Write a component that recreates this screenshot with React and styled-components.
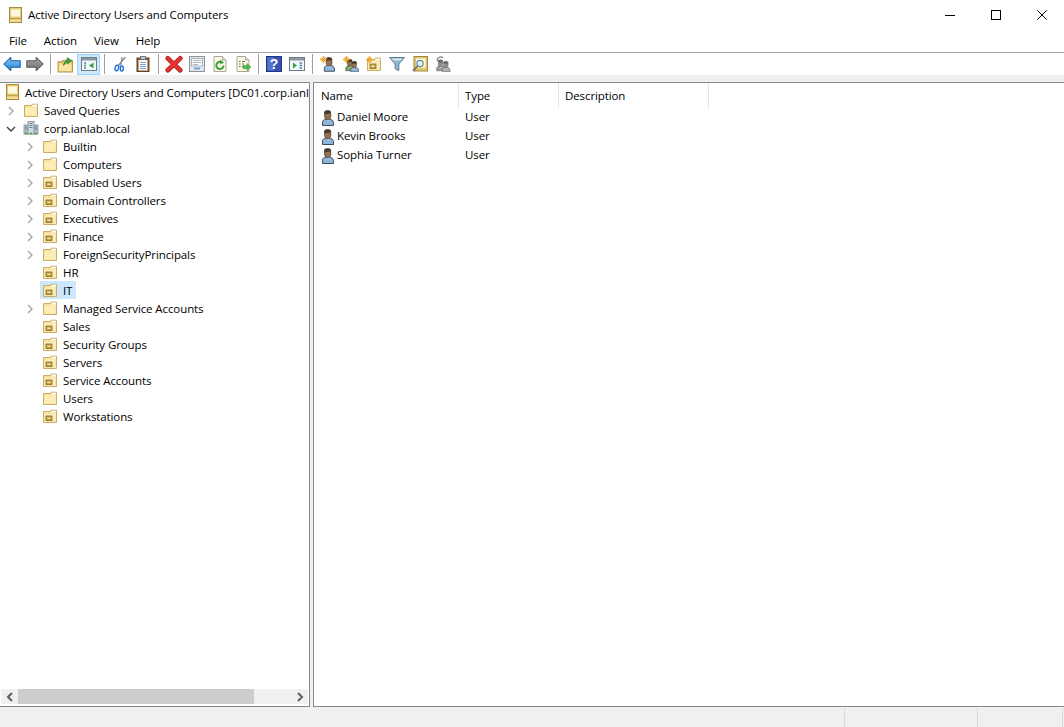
import React from "react";
import styled, { createGlobalStyle } from "styled-components";

const GlobalStyle = createGlobalStyle`
  html, body {
    margin: 0;
    padding: 0;
    background: #ffffff;
    overflow: hidden;
  }
  body {
    font-family: "Open Sans", "Noto Sans", "Liberation Sans", sans-serif;
    font-size: 11.5px;
    line-height: 14px;
    letter-spacing: -0.1px;
    color: #000000;
  }
`;

const Icon = ({ children, size = 16 }) => (
  <svg width={size} height={size} viewBox="0 0 16 16" style={{ display: "block", flex: "none" }}>
    {children}
  </svg>
);

const Figure = ({ x = 0, y = 0, s = 1, body = "#8db4da", hair = "#4a3b2c", face = "#94714f", edge = "#3a4a5c" }) => (
  <g transform={`translate(${x} ${y}) scale(${s})`}>
    <path d="M2.5 15.5 V12.2 C2.5 10.4 4.4 9.4 5.6 9 H9.6 C11 9.4 13.5 10.4 13.5 12.6 V15.5 Z" fill={body} stroke={edge} strokeWidth="1" />
    <path d="M7 9.6 L8 12 L9.2 9.6 Z" fill="#dfeaf4" />
    <path d="M4.6 1.8 C5.6 .4 9.6 .3 10.6 1.8 L10.8 6.4 C10.3 8.8 8.8 9.8 7.8 9.8 C6.4 9.8 5 8.8 4.6 6.4 Z" fill={face} stroke={hair} strokeWidth=".8" />
    <path d="M4.4 1.8 C5.6 0 9.8 0 10.8 1.8 L10.8 3.6 L4.8 4.2 Z" fill={hair} />
  </g>
);

const Star = ({ x = 3.5, y = 3.5 }) => (
  <g transform={`translate(${x} ${y})`}>
    <path d="M0 -3.4 L.9 -1 L3.4 0 L.9 1 L0 3.4 L-.9 1 L-3.4 0 L-.9 -1 Z M-2 -2 L2 2 M2 -2 L-2 2" fill="#f7c63a" stroke="#e88b12" strokeWidth=".7" />
  </g>
);

const UserIcon = () => (
  <Icon>
    <Figure />
  </Icon>
);

const FolderShape = ({ ou }) => (
  <g>
    <path d="M1.5 3.5 H9 V2.2 H14.5 V14.5 H1.5 Z" fill="#f8e29c" stroke="#ccae66" strokeWidth="1" />
    <path d="M9.5 2.8 H14 V4.5 H9.5 Z" fill="#ffffff" />
    <path d="M2.5 5.5 H13.5 V13.5 H2.5 Z" fill="#fdedb8" />
    {ou && <rect x="4" y="8" width="6" height="4.5" fill="#c9a23f" stroke="#7d6a3a" strokeWidth=".8" />}
    {ou && <rect x="5.3" y="9.6" width="3.4" height="1.2" fill="#f7eab8" />}
  </g>
);

const FolderIcon = ({ ou }) => (
  <Icon>
    <FolderShape ou={ou} />
  </Icon>
);

const SnapIcon = () => (
  <Icon>
    <rect x="2.5" y=".5" width="12" height="15" fill="#e3cb78" stroke="#a68a3c" />
    <rect x="4" y="2.5" width="9" height="7" fill="#fdf9e0" />
    <rect x="3" y="11" width="11" height="1" fill="#bfa04c" />
    <rect x="3" y="13" width="11" height="2" fill="#f2de96" />
  </Icon>
);

const DomainIcon = () => (
  <Icon>
    <rect x="1" y="5" width="5" height="9" fill="#b9c4cc" stroke="#7f8c95" strokeWidth=".8" />
    <rect x="10" y="5" width="5" height="9" fill="#b9c4cc" stroke="#7f8c95" strokeWidth=".8" />
    <rect x="5" y="1.5" width="6" height="12.5" fill="#d3dce2" stroke="#76838c" strokeWidth=".8" />
    <path d="M6.5 3.5 H9.5 M6.5 5.5 H9.5 M6.5 7.5 H9.5 M2 7 H4.5 M2 9 H4.5 M11.5 7 H14 M11.5 9 H14" stroke="#5d7f96" strokeWidth="1" />
    <rect x="2" y="12.5" width="2" height="2" fill="#40b040" />
    <rect x="7" y="12.5" width="2" height="2" fill="#40b040" />
    <rect x="12" y="12.5" width="2" height="2" fill="#40b040" />
  </Icon>
);

const Arrow = ({ dir, top, bottom, edge, id }) => (
  <Icon size={18}>
    <defs>
      <linearGradient id={id} x1="0" y1="0" x2="0" y2="1">
        <stop offset="0" stopColor={top} />
        <stop offset="1" stopColor={bottom} />
      </linearGradient>
    </defs>
    <path
      transform={dir === "right" ? "translate(16 0) scale(-1 1)" : undefined}
      d="M.7 8 L7 2.2 V5.2 H15.3 V10.8 H7 V13.8 Z"
      fill={`url(#${id})`}
      stroke={edge}
      strokeWidth=".9"
      strokeLinejoin="round"
    />
  </Icon>
);

const UpIcon = () => (
  <Icon size={17}>
    <path d="M1 5.5 H5 L6 4 H14.5 V15 H1 Z" fill="#f2d37d" stroke="#b8964a" />
    <path d="M2 8 H13.5 V14 H2 Z" fill="#fae6a5" />
    <path d="M6 9 C6.5 5.5 8 4.5 9.5 4 V1.5 L14 4.5 L9.8 7.6 V5.8 C8.5 6.2 7.4 7.4 6 9 Z" fill="#3fa63c" stroke="#21761f" strokeWidth=".5" />
  </Icon>
);

const TreeToggleIcon = () => (
  <Icon>
    <rect x=".5" y="1.5" width="15" height="13" fill="#f3f6f8" stroke="#6f7d88" />
    <rect x="1" y="2" width="14" height="2.5" fill="#8a97a2" />
    <path d="M3 7 H5 M3 9.5 H5 M3 12 H5" stroke="#4d83a8" strokeWidth="1.3" />
    <path d="M12.5 6.5 V12.5 L8 9.5 Z" fill="#34a33a" />
  </Icon>
);

const CutIcon = () => (
  <Icon>
    <path d="M13.5 .8 L6.5 9.5 M10 1 L8.8 9.5" stroke="#7a838c" strokeWidth="1.2" fill="none" />
    <ellipse cx="4.8" cy="12" rx="1.7" ry="2.8" transform="rotate(15 4.8 12)" fill="none" stroke="#1c6fd0" strokeWidth="1.4" />
    <ellipse cx="9.8" cy="12.5" rx="1.5" ry="2.6" fill="none" stroke="#1c6fd0" strokeWidth="1.4" />
  </Icon>
);

const PasteIcon = () => (
  <Icon>
    <rect x="2" y="2" width="12" height="13.5" fill="#8a5a34" stroke="#63401f" />
    <rect x="3.5" y="4" width="9" height="10.5" fill="#f4f8fb" />
    <path d="M5 6.5 H11 M5 8.5 H11 M5 10.5 H11 M5 12.5 H11" stroke="#7fa7cc" />
    <rect x="5.5" y=".5" width="5" height="3" fill="#c5ccd2" stroke="#5c6670" strokeWidth=".8" />
  </Icon>
);

const DeleteIcon = () => (
  <Icon size={18}>
    <path d="M2.5 3 L13.5 13.5 M13.5 3 L2.5 13.5" stroke="#a91c1c" strokeWidth="4.2" strokeLinecap="round" />
    <path d="M2.5 3 L13.5 13.5 M13.5 3 L2.5 13.5" stroke="#e8322c" strokeWidth="2.8" strokeLinecap="round" />
  </Icon>
);

const PropsIcon = () => (
  <Icon>
    <rect x=".5" y=".5" width="15" height="15" fill="#e4e8ec" stroke="#8a949c" />
    <rect x="2.5" y="2.5" width="11" height="7.5" fill="#fbfcfd" stroke="#a9b2ba" />
    <path d="M4 4.5 H12 M4 6.5 H12 M4 8.5 H9" stroke="#aab4bc" />
    <rect x="5" y="11.5" width="6" height="2" fill="#6aa4d8" />
  </Icon>
);

const DocShape = () => (
  <g>
    <path d="M2 .5 H10.5 L14 4 V15.5 H2 Z" fill="#fbf8e6" stroke="#a8a89a" />
    <path d="M10.5 .5 V4 H14" fill="#e6e3cc" stroke="#a8a89a" />
  </g>
);

const RefreshIcon = () => (
  <Icon>
    <DocShape />
    <path d="M11.5 9.5 A3.6 3.6 0 1 1 9.8 6.4" fill="none" stroke="#37a33a" strokeWidth="2" />
    <path d="M8.2 3.6 L12 6.5 L8.2 8.6 Z" fill="#37a33a" />
  </Icon>
);

const ExportIcon = () => (
  <Icon>
    <DocShape />
    <path d="M4 5.5 H5.5 M7 5.5 H10 M4 8 H5.5 M7 8 H9 M4 10.5 H5.5 M7 10.5 H8" stroke="#746f50" />
    <path d="M8 9.5 H12 V7.5 L15.8 11 L12 14.5 V12.5 H8 Z" fill="#56b948" stroke="#2e8a2a" strokeWidth=".5" />
  </Icon>
);

const HelpIcon = () => (
  <Icon>
    <rect x=".5" y=".5" width="15" height="15" fill="#3554b4" stroke="#1f3580" />
    <rect x="1.5" y="1.5" width="6" height="13" fill="#5574cc" />
    <text x="8" y="13" textAnchor="middle" fontSize="14" fontWeight="700" letterSpacing="0" fontFamily="Liberation Sans, sans-serif" fill="#ffffff">?</text>
  </Icon>
);

const MmcIcon = () => (
  <Icon>
    <rect x=".5" y="1.5" width="15" height="13" fill="#f3f6f8" stroke="#6f7d88" />
    <rect x="1" y="2" width="14" height="2.5" fill="#8a97a2" />
    <path d="M4 6.5 V12.5 L8 9.5 Z" fill="#34a33a" />
    <path d="M10.5 7 H13 M10.5 9.5 H13 M10.5 12 H13" stroke="#4d83a8" strokeWidth="1.3" />
  </Icon>
);

const NewUserIcon = () => (
  <Icon>
    <Figure x={2} y={1} s={0.92} />
    <Star />
  </Icon>
);

const NewGroupIcon = () => (
  <Icon>
    <Figure x={1} y={3} s={0.75} body="#7cae62" edge="#3a5a2c" />
    <Figure x={6} y={5} s={0.7} />
    <Star />
  </Icon>
);

const NewOuIcon = () => (
  <Icon>
    <FolderShape ou />
    <Star />
  </Icon>
);

const FilterIcon = () => (
  <Icon>
    <path d="M.5 1.5 H15.5 L9.8 8 V14.5 L6.2 12.8 V8 Z" fill="#93b6cf" stroke="#557a94" strokeLinejoin="round" />
    <path d="M2.5 2.5 H13.5 L11.5 4.5 H4.5 Z" fill="#d9e8f2" />
  </Icon>
);

const FindIcon = () => (
  <Icon>
    <rect x="2" y=".5" width="13.5" height="14.5" fill="#dfc672" stroke="#a68a3c" />
    <rect x="4" y="2.5" width="9.5" height="9" fill="#fdf9e0" />
    <circle cx="8" cy="7.5" r="3.2" fill="#e6f1f8" stroke="#6a8699" strokeWidth="1.2" />
    <path d="M5.6 10 L1 15" stroke="#6a6f73" strokeWidth="1.8" />
  </Icon>
);

const AddGroupIcon = () => (
  <Icon>
    <path d="M2 5 C2 1 6 0 8 2" fill="none" stroke="#7d7d7d" strokeWidth="1.2" />
    <Figure x={0} y={3.5} s={0.72} body="#a0a0a0" hair="#666666" face="#8c8c8c" edge="#666666" />
    <Figure x={5.5} y={5} s={0.7} body="#b0b0b0" hair="#666666" face="#8c8c8c" edge="#666666" />
  </Icon>
);

const Chevron = ({ open }) => (
  <svg width="10" height="10" viewBox="0 0 10 10" style={{ display: "block" }}>
    <path
      d={open ? "M1 3 L5 7 L9 3" : "M3 1 L7 5 L3 9"}
      fill="none"
      stroke={open ? "#404040" : "#a6a6a6"}
      strokeWidth="1.4"
    />
  </svg>
);

const Page = styled.div`
  width: 100%;
  height: 727px;
  display: flex;
  flex-direction: column;
  overflow: hidden;
`;

const TitleBar = styled.div`
  height: 30px;
  flex: none;
  display: flex;
  align-items: center;
  padding-left: 7px;
`;

const TitleText = styled.span`
  margin-left: 5px;
  flex: 1;
  white-space: nowrap;
`;

const WindowControls = styled.div`
  display: flex;
  margin-right: -1px;
`;

const WindowButton = styled.div`
  width: 46px;
  height: 30px;
  display: flex;
  align-items: center;
  justify-content: center;
`;

const MenuBar = styled.div`
  height: 22px;
  flex: none;
  display: flex;
  align-items: center;
  padding-left: 0.5px;
  border-bottom: 1px solid #a6a6a6;
`;

const MenuItem = styled.span`
  padding: 0 8.5px;
`;

const Toolbar = styled.div`
  height: 22px;
  flex: none;
  display: flex;
  align-items: center;
`;

const ToolButton = styled.div`
  width: 23px;
  height: 21px;
  flex: none;
  box-sizing: border-box;
  display: flex;
  align-items: center;
  justify-content: center;
  background: ${(p) => (p.$active ? "#cce8ff" : "transparent")};
  border: 1px solid ${(p) => (p.$active ? "#99d1ff" : "transparent")};
`;

const ToolSeparator = styled.div`
  width: 8px;
  height: 20px;
  flex: none;
  display: flex;
  justify-content: center;

  &::before {
    content: "";
    width: 1px;
    background: #a0a0a0;
  }
`;

const Strip = styled.div`
  height: 7px;
  flex: none;
  background: #f0f0f0;
`;

const Workspace = styled.div`
  flex: 1;
  min-height: 0;
  display: flex;
  background: #f0f0f0;
`;

const TreePane = styled.div`
  width: 310px;
  flex: none;
  box-sizing: border-box;
  display: flex;
  flex-direction: column;
  background: #ffffff;
  border-top: 1px solid #828790;
  border-right: 1px solid #828790;
  border-bottom: 1px solid #828790;
`;

const TreeBody = styled.div`
  flex: 1;
  min-height: 0;
  overflow: hidden;
`;

const TreeRow = styled.div`
  height: 18px;
  display: flex;
  align-items: center;
  white-space: nowrap;
  padding-left: ${(p) => [4, 3, 22][p.$level]}px;
`;

const Twist = styled.div`
  width: 15px;
  margin-right: 3px;
  padding: 1px 0 0 3px;
  box-sizing: border-box;
  flex: none;
`;

const TreeItem = styled.div`
  height: 18px;
  display: flex;
  align-items: center;
  padding: 0 4px 0 2px;
  gap: 5px;
  background: ${(p) => (p.$selected ? "#cce8ff" : "transparent")};
`;

const RootItem = styled(TreeItem)`
  padding-left: 0;
`;

const TreeLabel = styled.span`
  padding-top: 2px;
`;

const ScrollBar = styled.div`
  height: 15px;
  flex: none;
  margin: 0 0 2px 1px;
  width: 307px;
  display: flex;
  align-items: center;
  background: #f0f0f0;
`;

const ScrollButton = styled.div`
  width: 17px;
  flex: none;
  display: flex;
  justify-content: center;
`;

const ScrollThumb = styled.div`
  width: 236px;
  height: 15px;
  background: #cdcdcd;
  margin-right: auto;
`;

const Splitter = styled.div`
  width: 3px;
  flex: none;
`;

const ListPane = styled.div`
  flex: 1;
  min-width: 0;
  background: #ffffff;
  border-top: 1px solid #828790;
  border-left: 1px solid #828790;
  border-bottom: 1px solid #828790;
`;

const ColumnGrid = styled.div`
  display: grid;
  grid-template-columns: 145px 100px 150px;
`;

const ListHeader = styled(ColumnGrid)`
  height: 25px;
`;

const HeaderCell = styled.div`
  display: flex;
  align-items: center;
  padding-left: ${(p) => (p.$first ? 7 : 6)}px;
  border-right: 1px solid #e5e5e5;
`;

const ListRow = styled(ColumnGrid)`
  height: 19px;
  align-items: center;
`;

const NameCell = styled.div`
  display: flex;
  align-items: center;
  gap: 1px;
  padding-left: 6px;
`;

const NameText = styled.span`
  padding-bottom: 1px;
`;

const TypeCell = styled.div`
  padding: 0 0 1px 6px;
`;

const StatusBar = styled.div`
  height: 20px;
  flex: none;
  display: flex;
  justify-content: flex-end;
  padding-top: 1px;
  box-sizing: border-box;
  background: #f0f0f0;
`;

const StatusCell = styled.div`
  width: ${(p) => p.$width}px;
  box-sizing: border-box;
  border-left: 1px solid #d9d9d9;
`;

const treeItems = [
  { name: "Builtin", twist: true },
  { name: "Computers", twist: true },
  { name: "Disabled Users", twist: true, ou: true },
  { name: "Domain Controllers", twist: true, ou: true },
  { name: "Executives", twist: true, ou: true },
  { name: "Finance", twist: true, ou: true },
  { name: "ForeignSecurityPrincipals", twist: true },
  { name: "HR", ou: true },
  { name: "IT", ou: true, selected: true },
  { name: "Managed Service Accounts", twist: true },
  { name: "Sales", ou: true },
  { name: "Security Groups", ou: true },
  { name: "Servers", ou: true },
  { name: "Service Accounts", ou: true },
  { name: "Users" },
  { name: "Workstations", ou: true },
];

const users = ["Daniel Moore", "Kevin Brooks", "Sophia Turner"];

const toolGroups = [
  [<Arrow key="back" id="backGrad" top="#8ccbf6" bottom="#1b7fd6" edge="#1463a8" />, <Arrow key="fwd" id="fwdGrad" dir="right" top="#a9a9a9" bottom="#6e6e6e" edge="#5a5a5a" />],
  [<UpIcon key="up" />, <TreeToggleIcon key="tree" />],
  [<CutIcon key="cut" />, <PasteIcon key="paste" />],
  [<DeleteIcon key="del" />, <PropsIcon key="props" />, <RefreshIcon key="refresh" />, <ExportIcon key="export" />],
  [<HelpIcon key="help" />, <MmcIcon key="mmc" />],
  [<NewUserIcon key="nu" />, <NewGroupIcon key="ng" />, <NewOuIcon key="no" />, <FilterIcon key="filter" />, <FindIcon key="find" />, <AddGroupIcon key="add" />],
];

const App = () => {
  return (
    <Page>
      <GlobalStyle />
      <TitleBar>
        <SnapIcon />
        <TitleText>Active Directory Users and Computers</TitleText>
        <WindowControls>
          <WindowButton>
            <svg width="10" height="10" viewBox="0 0 10 10"><path d="M0 5.5 H10" stroke="#000" /></svg>
          </WindowButton>
          <WindowButton>
            <svg width="10" height="10" viewBox="0 0 10 10"><rect x=".5" y=".5" width="9" height="9" fill="none" stroke="#000" /></svg>
          </WindowButton>
          <WindowButton>
            <svg width="10" height="10" viewBox="0 0 10 10"><path d="M.3 .3 L9.7 9.7 M9.7 .3 L.3 9.7" stroke="#000" /></svg>
          </WindowButton>
        </WindowControls>
      </TitleBar>
      <MenuBar>
        <MenuItem>File</MenuItem>
        <MenuItem>Action</MenuItem>
        <MenuItem>View</MenuItem>
        <MenuItem>Help</MenuItem>
      </MenuBar>
      <Toolbar>
        {toolGroups.map((group, i) => (
          <React.Fragment key={i}>
            {i > 0 && <ToolSeparator />}
            {group.map((icon) => (
              <ToolButton key={icon.key} $active={icon.key === "tree"}>
                {icon}
              </ToolButton>
            ))}
          </React.Fragment>
        ))}
      </Toolbar>
      <Strip />
      <Workspace>
        <TreePane>
          <TreeBody>
            <TreeRow $level={0}>
              <RootItem>
                <SnapIcon />
                <TreeLabel>Active Directory Users and Computers [DC01.corp.ianl</TreeLabel>
              </RootItem>
            </TreeRow>
            <TreeRow $level={1}>
              <Twist><Chevron /></Twist>
              <TreeItem>
                <FolderIcon />
                <TreeLabel>Saved Queries</TreeLabel>
              </TreeItem>
            </TreeRow>
            <TreeRow $level={1}>
              <Twist><Chevron open /></Twist>
              <TreeItem>
                <DomainIcon />
                <TreeLabel>corp.ianlab.local</TreeLabel>
              </TreeItem>
            </TreeRow>
            {treeItems.map((item) => (
              <TreeRow $level={2} key={item.name}>
                <Twist>{item.twist && <Chevron />}</Twist>
                <TreeItem $selected={item.selected}>
                  <FolderIcon ou={item.ou} />
                  <TreeLabel>{item.name}</TreeLabel>
                </TreeItem>
              </TreeRow>
            ))}
          </TreeBody>
          <ScrollBar>
            <ScrollButton>
              <svg width="8" height="10" viewBox="0 0 8 10"><path d="M6 1 L2 5 L6 9" fill="none" stroke="#606060" strokeWidth="2" /></svg>
            </ScrollButton>
            <ScrollThumb />
            <ScrollButton>
              <svg width="8" height="10" viewBox="0 0 8 10"><path d="M2 1 L6 5 L2 9" fill="none" stroke="#606060" strokeWidth="2" /></svg>
            </ScrollButton>
          </ScrollBar>
        </TreePane>
        <Splitter />
        <ListPane>
          <ListHeader>
            <HeaderCell $first>Name</HeaderCell>
            <HeaderCell>Type</HeaderCell>
            <HeaderCell>Description</HeaderCell>
          </ListHeader>
          {users.map((name) => (
            <ListRow key={name}>
              <NameCell>
                <UserIcon />
                <NameText>{name}</NameText>
              </NameCell>
              <TypeCell>User</TypeCell>
            </ListRow>
          ))}
        </ListPane>
      </Workspace>
      <StatusBar>
        <StatusCell $width={133} />
        <StatusCell $width={85} />
        <StatusCell $width={2} />
      </StatusBar>
    </Page>
  );
};

export default App;
